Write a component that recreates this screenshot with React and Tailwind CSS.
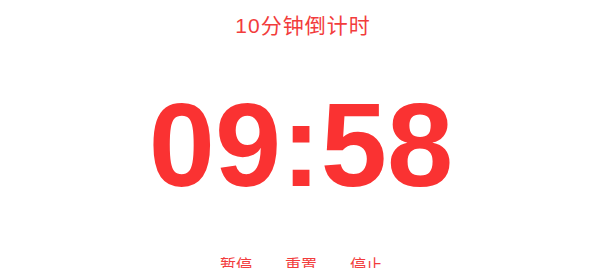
export default function App() {
  return (
    <div className="w-[602px] h-[268px] bg-white overflow-hidden flex flex-col items-center">
      <div className="mt-[13px] pl-[4px] text-[21px] leading-[26px] tracking-[1px] text-[#f23c3c] font-['Liberation_Sans','Noto_Sans_CJK_SC',sans-serif]">
        10分钟倒计时
      </div>
      <div className="mt-[46px] text-[119px] leading-[120px] font-bold text-[#fa3232] font-['Liberation_Sans',sans-serif]">
        09:58
      </div>
      <div className="mt-[51px] flex gap-[33px] text-[16px] leading-[20px] text-[#f23c3c] font-['Liberation_Sans','Noto_Sans_CJK_SC',sans-serif]">
        <button>暂停</button>
        <button>重置</button>
        <button>停止</button>
      </div>
    </div>
  );
}
